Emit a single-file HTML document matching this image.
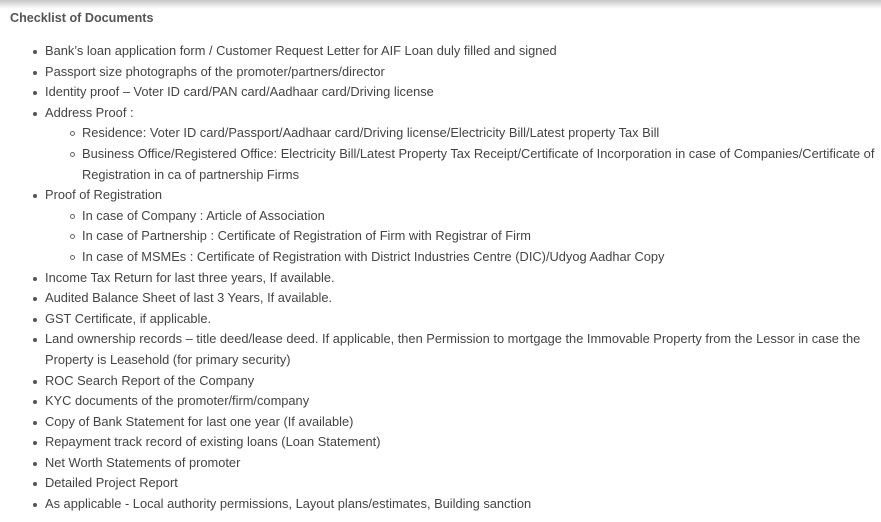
<!DOCTYPE html>
<html><head><style>
html,body{margin:0;padding:0;background:#fff;width:881px;height:522px;overflow:hidden}
body{font-family:"Liberation Sans",Arial,sans-serif;color:#444;font-size:12.85px;position:relative}
.sh{position:absolute;left:0;top:0;width:881px;height:9px;background:linear-gradient(#c8c8c8,rgba(255,255,255,0))}
h4{position:absolute;left:10px;top:11px;margin:0;font-size:12.6px;font-weight:bold;color:#555}
ul{margin:0;padding-left:0;list-style:none}
.main{position:absolute;left:45px;top:41px;width:832px;line-height:20.6px}
.main>li{position:relative}
.main>li:before{content:"";position:absolute;left:-12px;top:9px;width:4px;height:4px;border-radius:50%;background:#555}
.sub{padding-left:37px}
.sub>li{position:relative}
.sub>li:before{content:"";position:absolute;left:-12px;top:8px;width:3px;height:3px;border-radius:50%;border:1px solid #666}
</style></head><body>
<div class="sh"></div>
<h4>Checklist of Documents</h4>
<ul class="main">
<li>Bank’s loan application form / Customer Request Letter for AIF Loan duly filled and signed</li>
<li>Passport size photographs of the promoter/partners/director</li>
<li>Identity proof – Voter ID card/PAN card/Aadhaar card/Driving license</li>
<li>Address Proof :
<ul class="sub">
<li>Residence: Voter ID card/Passport/Aadhaar card/Driving license/Electricity Bill/Latest property Tax Bill</li>
<li>Business Office/Registered Office: Electricity Bill/Latest Property Tax Receipt/Certificate of Incorporation in case of Companies/Certificate of Registration in ca of partnership Firms</li>
</ul></li>
<li>Proof of Registration
<ul class="sub">
<li>In case of Company : Article of Association</li>
<li>In case of Partnership : Certificate of Registration of Firm with Registrar of Firm</li>
<li>In case of MSMEs : Certificate of Registration with District Industries Centre (DIC)/Udyog Aadhar Copy</li>
</ul></li>
<li>Income Tax Return for last three years, If available.</li>
<li>Audited Balance Sheet of last 3 Years, If available.</li>
<li>GST Certificate, if applicable.</li>
<li>Land ownership records – title deed/lease deed. If applicable, then Permission to mortgage the Immovable Property from the Lessor in case the Property is Leasehold (for primary security)</li>
<li>ROC Search Report of the Company</li>
<li>KYC documents of the promoter/firm/company</li>
<li>Copy of Bank Statement for last one year (If available)</li>
<li>Repayment track record of existing loans (Loan Statement)</li>
<li>Net Worth Statements of promoter</li>
<li>Detailed Project Report</li>
<li>As applicable - Local authority permissions, Layout plans/estimates, Building sanction</li>
</ul>
</body></html>
